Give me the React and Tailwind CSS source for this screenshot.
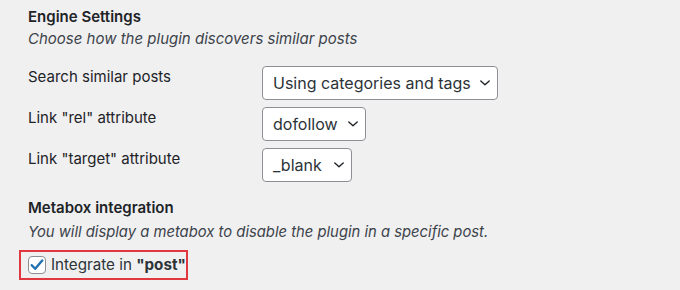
import React from "react";

function Chevron() {
  return (
    <svg width="12" height="8" viewBox="0 0 12 8" className="shrink-0">
      <path d="M1.8 2 L6 5.8 L10.2 2" fill="none" stroke="#1d2327" strokeWidth="1.4" strokeLinecap="round" strokeLinejoin="round" />
    </svg>
  );
}

function Select({ value, width }) {
  return (
    <div className={`flex h-[34px] items-center justify-between whitespace-nowrap rounded-[4px] border border-[#8c8f94] bg-white pl-[10px] pr-[6px] text-[16px] text-[#2c3338] ${width}`}>
      <span>{value}</span>
      <Chevron />
    </div>
  );
}

function Row({ label, value, width }) {
  return (
    <div className="flex">
      <div className="w-[234px] pt-[1px] text-[15px] leading-[20px] text-[#1d2327]">{label}</div>
      <Select value={value} width={width} />
    </div>
  );
}

export default function App() {
  return (
    <div className="h-[290px] w-[680px] bg-[#f0f0f1] pl-[28px] pt-[6px]" style={{ fontFamily: "Inter, 'Noto Sans', sans-serif" }}>
      <div className="text-[15px] font-semibold leading-[22px] text-[#1d2327]">Engine Settings</div>
      <div className="text-[15px] italic leading-[22px] text-[#3c434a]">Choose how the plugin discovers similar posts</div>
      <div className="mt-[16px] flex flex-col gap-[7px]">
        <Row label="Search similar posts" value="Using categories and tags" width="w-[236px]" />
        <Row label={'Link "rel" attribute'} value="dofollow" width="w-[104px]" />
        <Row label={'Link "target" attribute'} value="_blank" width="w-[90px]" />
      </div>
      <div className="mt-[15px] text-[15px] font-semibold leading-[22px] text-[#1d2327]">Metabox integration</div>
      <div className="mt-[2px] text-[14.8px] italic leading-[22px] text-[#3c434a]">You will display a metabox to disable the plugin in a specific post.</div>
      <div className="ml-[-9px] mt-[7px] flex h-[30px] w-[169px] items-center whitespace-nowrap border-2 border-[#e0383e] pl-[7px]">
        <div className="flex h-[18px] w-[18px] shrink-0 items-center justify-center rounded-[4px] border border-[#8c8f94] bg-white">
          <svg width="14" height="12" viewBox="0 0 14 12">
            <path d="M1.8 6.2 L5.2 9.8 L12.2 1.5" fill="none" stroke="#2271b1" strokeWidth="2.4" strokeLinecap="round" strokeLinejoin="round" />
          </svg>
        </div>
        <span className="ml-[5px] text-[15.2px] text-[#2c3338]">
          Integrate in <b className="font-bold">"post"</b>
        </span>
      </div>
    </div>
  );
}
